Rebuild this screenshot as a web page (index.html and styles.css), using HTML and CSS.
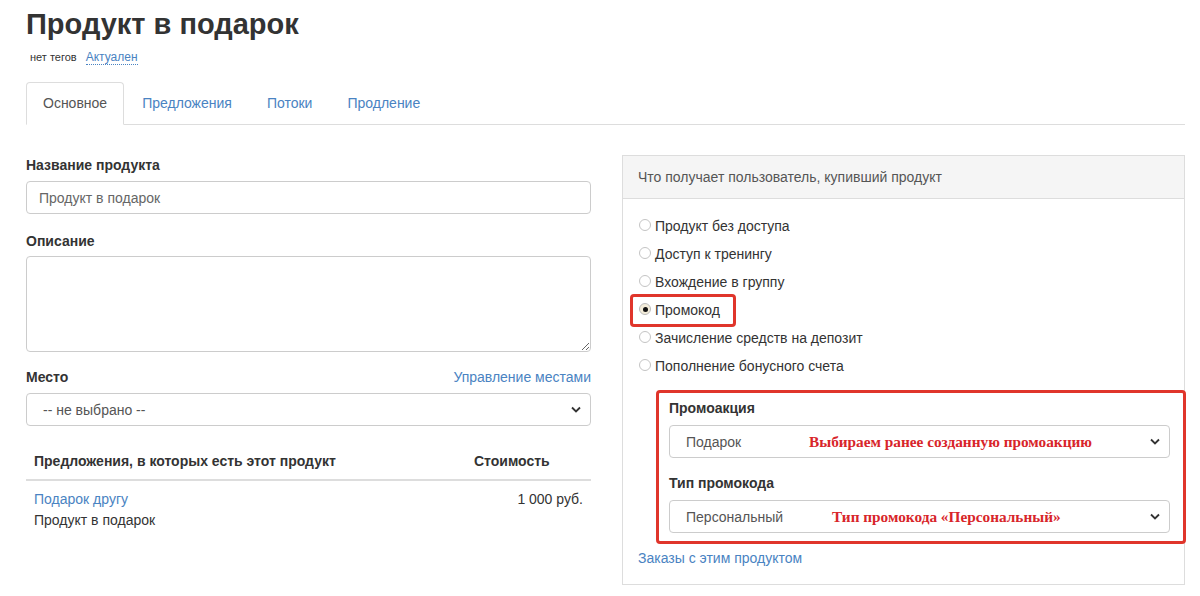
FILE: index.html
```html
<!DOCTYPE html>
<html lang="ru">
<head>
    <meta charset="UTF-8">
    <title>Продукт в подарок</title>
    <link rel="stylesheet" href="styles.css">
</head>
<body>
    <div class="page">
        <h1 class="title">Продукт в подарок</h1>
        <div class="meta">
            <span class="tags">нет тегов</span>
            <a class="status" href="#">Актуален</a>
        </div>
        <ul class="tabs">
            <li class="tab active">Основное</li>
            <li class="tab"><a href="#">Предложения</a></li>
            <li class="tab"><a href="#">Потоки</a></li>
            <li class="tab"><a href="#">Продление</a></li>
        </ul>

        <div class="content">
            <div class="main-col">
                <div class="field">
                    <label class="field-label" for="name">Название продукта</label>
                    <input class="control" id="name" type="text" value="Продукт в подарок">
                </div>
                <div class="field field-area">
                    <label class="field-label" for="descr">Описание</label>
                    <textarea class="control area" id="descr"></textarea>
                </div>
                <div class="field">
                    <div class="label-row">
                        <span class="field-label">Место</span>
                        <a href="#">Управление местами</a>
                    </div>
                    <div class="select">
                        <span>-- не выбрано --</span>
                        <svg class="chevron" width="10" height="7" viewBox="0 0 10 7"><path d="M1 1.5l4 4 4-4" fill="none" stroke="#333" stroke-width="1.8"/></svg>
                    </div>
                </div>

                <table class="offers">
                    <thead>
                        <tr>
                            <th>Предложения, в которых есть этот продукт</th>
                            <th class="price-col">Стоимость</th>
                        </tr>
                    </thead>
                    <tbody>
                        <tr>
                            <td><a href="#">Подарок другу</a><br>Продукт в подарок</td>
                            <td class="price">1 000 руб.</td>
                        </tr>
                    </tbody>
                </table>
            </div>

            <div class="panel">
                <div class="panel-head">Что получает пользователь, купивший продукт</div>
                <div class="panel-body">
                    <div class="radio"><span class="dot"></span>Продукт без доступа</div>
                    <div class="radio"><span class="dot"></span>Доступ к тренингу</div>
                    <div class="radio"><span class="dot"></span>Вхождение в группу</div>
                    <div class="radio marked"><span class="dot checked"></span>Промокод</div>
                    <div class="radio"><span class="dot"></span>Зачисление средств на депозит</div>
                    <div class="radio"><span class="dot"></span>Пополнение бонусного счета</div>

                    <div class="promo-box">
                        <div class="field-label">Промоакция</div>
                        <div class="select">
                            <span>Подарок</span>
                            <span class="note note-first">Выбираем ранее созданную промоакцию</span>
                            <svg class="chevron" width="10" height="7" viewBox="0 0 10 7"><path d="M1 1.5l4 4 4-4" fill="none" stroke="#333" stroke-width="1.8"/></svg>
                        </div>
                        <div class="field-label second">Тип промокода</div>
                        <div class="select">
                            <span>Персональный</span>
                            <span class="note note-second">Тип промокода «Персональный»</span>
                            <svg class="chevron" width="10" height="7" viewBox="0 0 10 7"><path d="M1 1.5l4 4 4-4" fill="none" stroke="#333" stroke-width="1.8"/></svg>
                        </div>
                    </div>

                    <a class="orders-link" href="#">Заказы с этим продуктом</a>
                </div>
            </div>
        </div>
    </div>
</body>
</html>
```

FILE: styles.css
```css
body {
    margin: 0;
    background: #fff;
    color: #333;
    font-family: "Liberation Sans", Arial, sans-serif;
    font-size: 14px;
}
a {
    color: #4a83c2;
    text-decoration: none;
}
.page {
    padding: 0 15px 0 26px;
}
.title {
    margin: 0;
    padding-top: 6px;
    font-size: 29px;
    line-height: 36px;
    font-weight: bold;
    color: #333;
}
.meta {
    display: flex;
    align-items: center;
    gap: 9px;
    margin-top: 5px;
    padding-left: 4px;
    height: 20px;
}
.tags {
    font-size: 11px;
    color: #333;
}
.status {
    font-size: 12px;
    border-bottom: 1px dotted #4a83c2;
    line-height: 14px;
}
.tabs {
    display: flex;
    list-style: none;
    margin: 15px 0 0;
    padding: 0;
    border-bottom: 1px solid #ddd;
}
.tab {
    height: 41px;
    line-height: 41px;
    padding: 0 16px;
    margin-right: 1px;
    margin-bottom: -1px;
    border: 1px solid transparent;
    border-radius: 4px 4px 0 0;
    font-size: 14px;
}
.tab.active {
    color: #555;
    background: #fff;
    border-color: #ddd;
    border-bottom-color: #fff;
}
.content {
    display: grid;
    grid-template-columns: 565px 563px;
    gap: 31px;
    padding-top: 30px;
}
.field {
    margin-bottom: 15px;
}
.field:first-child {
    margin-bottom: 17px;
}
.field-label {
    display: block;
    font-weight: bold;
    line-height: 20px;
    margin-bottom: 6px;
}
.field-area .field-label {
    margin-bottom: 5px;
}
.label-row {
    display: flex;
    justify-content: space-between;
    align-items: baseline;
}
.label-row a {
    line-height: 20px;
}
.control {
    display: block;
    box-sizing: border-box;
    width: 100%;
    height: 33px;
    padding: 0 12px;
    border: 1px solid #ccc;
    border-radius: 4px;
    font-family: inherit;
    font-size: 14px;
    color: #666;
    margin: 0;
}
.area {
    height: 96px;
    resize: vertical;
}
.select {
    position: relative;
    display: flex;
    align-items: center;
    justify-content: space-between;
    box-sizing: border-box;
    height: 33px;
    padding: 0 9px 0 16px;
    border: 1px solid #ccc;
    border-radius: 4px;
    color: #555;
}
.offers {
    width: 100%;
    border-collapse: collapse;
    margin-top: 17px;
}
.offers th {
    text-align: left;
    font-weight: bold;
    padding: 8px;
    line-height: 20px;
    border-bottom: 2px solid #ddd;
}
.offers td {
    padding: 8px;
    line-height: 21px;
    vertical-align: top;
}
.price-col {
    width: 109px;
}
.offers td.price {
    text-align: right;
}
.panel {
    border: 1px solid #ddd;
    align-self: start;
}
.panel-head {
    background: #f5f5f5;
    border-bottom: 1px solid #ddd;
    padding: 11px 15px;
    line-height: 20px;
    font-size: 14px;
    color: #555;
}
.panel-body {
    padding: 13px 15px 16px;
}
.radio {
    position: relative;
    display: flex;
    align-items: center;
    height: 28px;
    color: #333;
}
.dot {
    box-sizing: border-box;
    width: 12px;
    height: 12px;
    margin: -2px 4px 0 1px;
    border: 1px solid #c4c4c4;
    border-radius: 50%;
    background: #fff;
    position: relative;
}
.dot.checked {
    border-color: #bbb;
    background: #f3ecd9;
}
.dot.checked::after {
    content: "";
    position: absolute;
    left: 2.5px;
    top: 2.5px;
    width: 5px;
    height: 5px;
    border-radius: 50%;
    background: #111;
}
.radio.marked::after {
    content: "";
    position: absolute;
    left: -8px;
    top: -2px;
    width: 106px;
    height: 33px;
    box-sizing: border-box;
    border: 3px solid #e0352b;
    border-radius: 4px;
}
.promo-box {
    margin: 10px -17px 4px 18px;
    padding: 5px 13px 8px 10px;
    border: 3px solid #e0352b;
    border-radius: 4px;
}
.promo-box .field-label {
    margin-bottom: 7px;
}
.promo-box .field-label.second {
    margin-top: 15px;
}
.note {
    position: absolute;
    top: 50%;
    transform: translateY(-50%);
    font-family: "Liberation Serif", "Times New Roman", serif;
    font-weight: bold;
    font-size: 15.3px;
    color: #d8252a;
    white-space: nowrap;
}
.note-first {
    left: 139px;
}
.note-second {
    left: 162px;
}
.chevron {
    flex: none;
}
.orders-link {
    display: block;
    line-height: 20px;
}
```
